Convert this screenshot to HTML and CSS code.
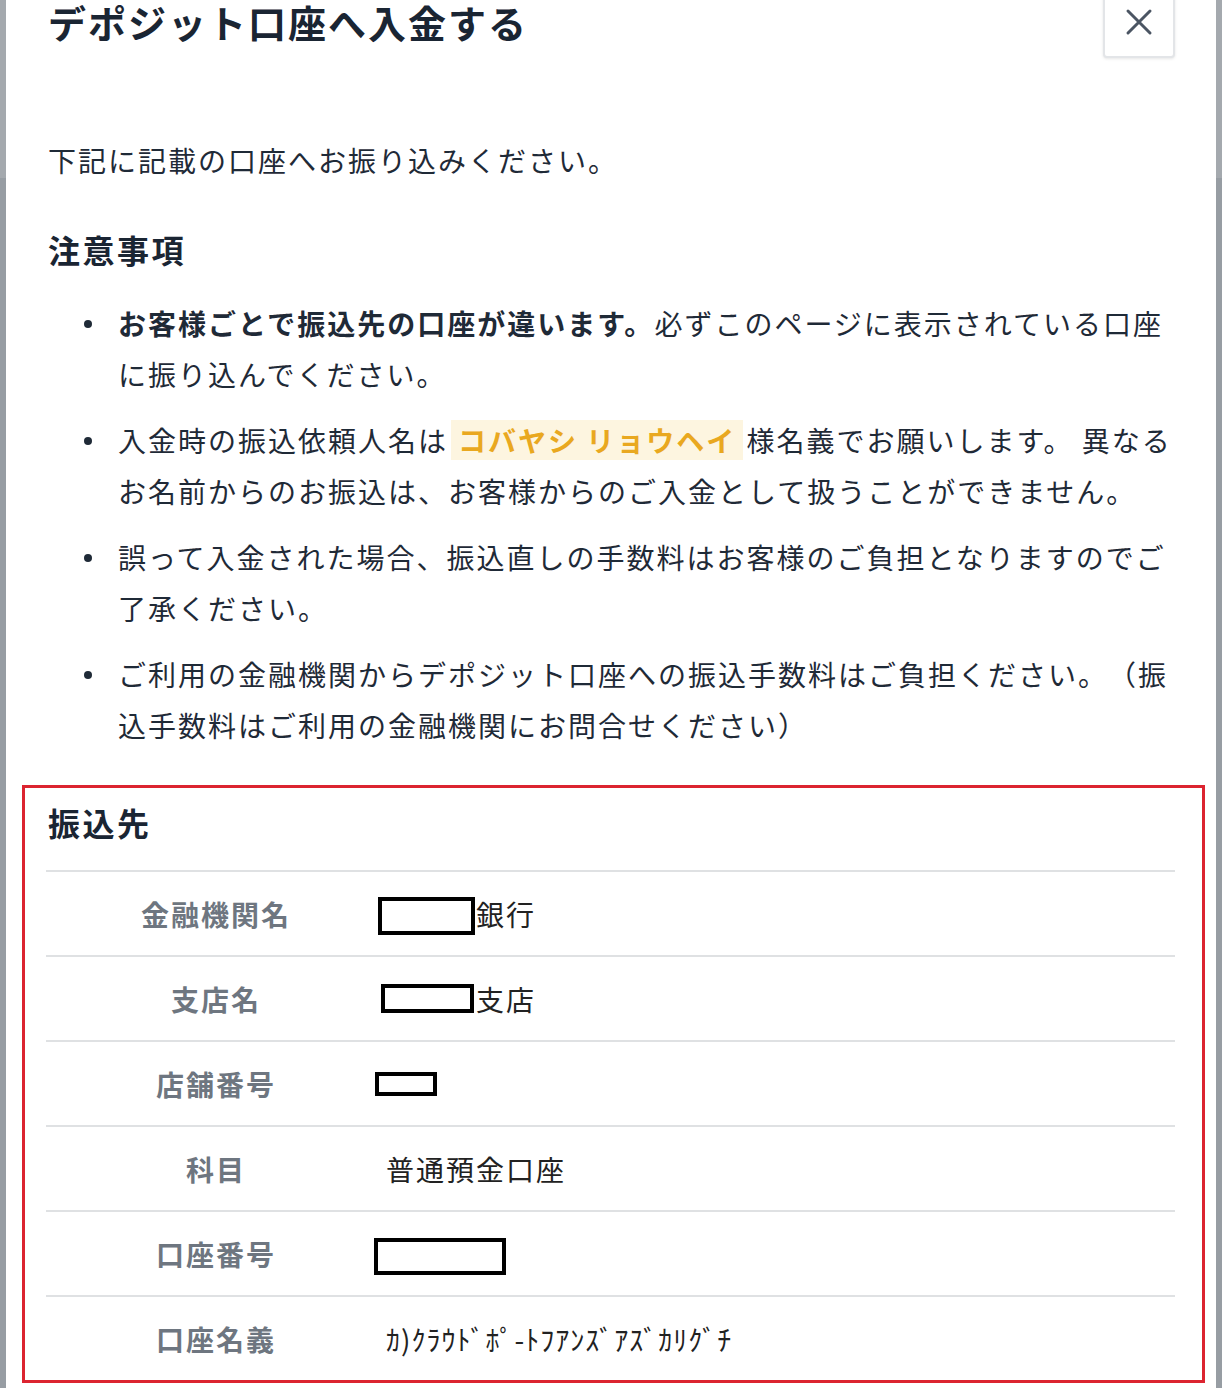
FILE: index.html
```html
<!DOCTYPE html>
<html lang="ja">
  <head>
    <meta charset="utf-8">
    <title>デポジット口座へ入金する</title>
    <link rel="stylesheet" href="styles.css">
  </head>
  <body>

    <div class="modal">
      <div class="modal-header">
        <h2 class="modal-title">デポジット口座へ入金する</h2>
        <button class="close-btn" aria-label="閉じる">
          <svg width="28" height="28" viewBox="0 0 28 28">
            <path d="M3 3 L25 25 M25 3 L3 25" stroke="#4b5563" stroke-width="3" stroke-linecap="round" fill="none"/>
          </svg>
        </button>
      </div>

      <p class="intro">下記に記載の口座へお振り込みください。</p>

      <h3 class="section-title">注意事項</h3>
      <ul class="notes">
        <li><strong>お客様ごとで振込先の口座が違います。</strong>必ずこのページに表示されている口座に振り込んでください。</li>
        <li>入金時の振込依頼人名は<span class="payer">コバヤシ リョウヘイ</span>様名義でお願いします。 異なるお名前からのお振込は、お客様からのご入金として扱うことができません。</li>
        <li>誤って入金された場合、振込直しの手数料はお客様のご負担となりますのでご了承ください。</li>
        <li>ご利用の金融機関からデポジット口座への振込手数料はご負担ください。（振込手数料はご利用の金融機関にお問合せください）</li>
      </ul>

      <!-- 振込先 -->
      <section class="transfer">
        <h3 class="section-title transfer-title">振込先</h3>
        <div class="bank-table">
          <div class="bank-row">
            <div class="bank-label">金融機関名</div>
            <div class="bank-value"><span class="redact redact-bank"></span>銀行</div>
          </div>
          <div class="bank-row">
            <div class="bank-label">支店名</div>
            <div class="bank-value"><span class="redact redact-branch"></span>支店</div>
          </div>
          <div class="bank-row">
            <div class="bank-label">店舗番号</div>
            <div class="bank-value"><span class="redact redact-code"></span></div>
          </div>
          <div class="bank-row">
            <div class="bank-label">科目</div>
            <div class="bank-value">普通預金口座</div>
          </div>
          <div class="bank-row">
            <div class="bank-label">口座番号</div>
            <div class="bank-value"><span class="redact redact-number"></span></div>
          </div>
          <div class="bank-row">
            <div class="bank-label">口座名義</div>
            <div class="bank-value account-name">ｶ)ｸﾗｳﾄﾞﾎﾟ-ﾄﾌｱﾝｽﾞｱｽﾞｶﾘｸﾞﾁ</div>
          </div>
        </div>
      </section>
    </div>

  </body>
</html>
```

FILE: styles.css
```css
body {
  margin: 0;
  height: 1388px;
  overflow: hidden;
  background: linear-gradient(#a4a9ae 0, #a4a9ae 178px, #979da3 178px);
  font-family: "Noto Sans CJK JP", "Noto Sans", sans-serif;
  color: #1f2a37;
  text-spacing-trim: space-all;
}

.modal {
  box-sizing: border-box;
  width: 1210px;
  min-height: 1388px;
  margin-left: 6px;
  padding: 0 41px 0 42px;
  background: #fff;
}

.modal-header {
  display: flex;
  justify-content: space-between;
  align-items: flex-start;
  height: 58px;
}

.modal-title {
  margin: 0;
  font-size: 38px;
  line-height: 44px;
  font-weight: 700;
  letter-spacing: 2px;
  color: #1a2533;
}

.close-btn {
  display: flex;
  align-items: center;
  justify-content: center;
  width: 72px;
  height: 72px;
  margin-top: -14px;
  padding: 0;
  background: #fff;
  border: 2px solid #e3e5e8;
  border-radius: 4px;
  box-shadow: 0 1px 3px rgba(0, 0, 0, 0.1);
  cursor: pointer;
}

.intro {
  margin: 77px 0 0;
  font-size: 28px;
  line-height: 51px;
  letter-spacing: 2px;
}

.section-title {
  margin: 41px 0 0;
  font-size: 32px;
  line-height: 45px;
  font-weight: 700;
  letter-spacing: 2.5px;
  color: #1a2533;
}

.notes {
  list-style: none;
  margin: 26px -10px 0 0;
  padding-left: 70px;
}

.notes li {
  position: relative;
  font-size: 28px;
  line-height: 51px;
  letter-spacing: 2px;
}

.notes li + li {
  margin-top: 15px;
}

.notes li::before {
  content: "";
  position: absolute;
  left: -34px;
  top: 22px;
  width: 8px;
  height: 8px;
  border-radius: 50%;
  background: #1f2a37;
}

.notes strong {
  font-weight: 700;
}

.payer {
  margin: 0 3px;
  padding: 0 7px;
  font-weight: 700;
  color: #e9a820;
  background: #fdf5e0;
}

.transfer {
  margin: 34px -30px 0 -26px;
  padding: 12px 27px 0 21px;
  border: 3px solid #dc2430;
}

.transfer-title {
  margin: 0 0 0 2px;
}

.bank-table {
  margin-top: 25px;
}

.bank-row {
  display: grid;
  grid-template-columns: 340px 1fr;
  align-items: center;
  box-sizing: border-box;
  height: 85px;
  border-top: 2px solid #dfe1e3;
}

.bank-label {
  text-align: center;
  font-size: 28px;
  font-weight: 700;
  letter-spacing: 2px;
  color: #6e7680;
}

.bank-value {
  display: flex;
  align-items: center;
  font-size: 28px;
  letter-spacing: 2px;
  color: #222;
}

.redact {
  display: inline-block;
  box-sizing: border-box;
  border: 4px solid #000;
  background: #fff;
}

.redact-bank {
  width: 97px;
  height: 38px;
  margin: 4px 1px 0 -8px;
}

.redact-branch {
  width: 93px;
  height: 29px;
  margin: 0 2px 0 -5px;
}

.redact-code {
  width: 62px;
  height: 24px;
  margin-left: -11px;
}

.redact-number {
  width: 132px;
  height: 37px;
  margin: 5px 0 0 -12px;
}

.account-name {
  letter-spacing: 1px;
}
```
